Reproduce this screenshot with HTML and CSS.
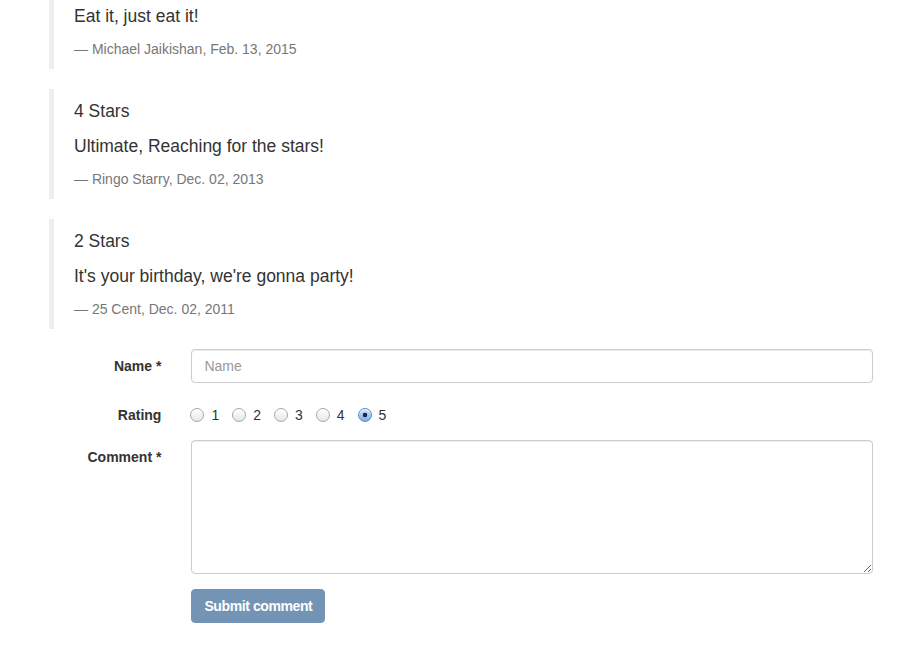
FILE: index.html
```html
<!DOCTYPE html>
<html lang="en">
<head>
<meta charset="utf-8">
<title>Comments</title>
<link rel="stylesheet" href="styles.css">
</head>
<body>
<div class="page">
  <div class="reviews">
    <blockquote class="review">
      <p>Eat it, just eat it!</p>
      <footer>Michael Jaikishan, Feb. 13, 2015</footer>
    </blockquote>
    <blockquote class="review">
      <p>4 Stars</p>
      <p>Ultimate, Reaching for the stars!</p>
      <footer>Ringo Starry, Dec. 02, 2013</footer>
    </blockquote>
    <blockquote class="review">
      <p>2 Stars</p>
      <p>It's your birthday, we're gonna party!</p>
      <footer>25 Cent, Dec. 02, 2011</footer>
    </blockquote>
  </div>
  <form class="comment-form">
    <div class="form-row">
      <label class="control-label" for="name">Name *</label>
      <div class="field">
        <input class="text-input" id="name" type="text" placeholder="Name">
      </div>
    </div>
    <div class="form-row">
      <span class="control-label">Rating</span>
      <div class="field radios">
        <label class="radio-inline"><input type="radio" name="rating" value="1"><span>1</span></label>
        <label class="radio-inline"><input type="radio" name="rating" value="2"><span>2</span></label>
        <label class="radio-inline"><input type="radio" name="rating" value="3"><span>3</span></label>
        <label class="radio-inline"><input type="radio" name="rating" value="4"><span>4</span></label>
        <label class="radio-inline"><input type="radio" name="rating" value="5" checked><span>5</span></label>
      </div>
    </div>
    <div class="form-row">
      <label class="control-label" for="comment">Comment *</label>
      <div class="field">
        <textarea class="text-area" id="comment" rows="6"></textarea>
      </div>
    </div>
    <div class="form-row">
      <span></span>
      <div class="field">
        <button class="btn-submit" type="submit" disabled>Submit comment</button>
      </div>
    </div>
  </form>
</div>
</body>
</html>
```

FILE: styles.css
```css
* { box-sizing: border-box; }

html, body {
  margin: 0;
  background: #fff;
}

body {
  font-family: "Liberation Sans", Arial, sans-serif;
  font-size: 14px;
  line-height: 1.42857;
  color: #333;
}

.page {
  margin-top: -6px;
  padding: 0 23px 0 34px;
}

.review {
  margin: 0 15px 20px;
  padding: 10px 20px;
  border-left: 5px solid #eee;
  font-size: 17.5px;
}

.review p {
  margin: 0 0 10px;
  line-height: 25px;
}

.review footer {
  font-size: 14px;
  line-height: 20px;
  color: #777;
}

.review footer::before {
  content: "\2014 \00A0";
}

.form-row {
  display: grid;
  grid-template-columns: 142.4px 1fr;
  margin-bottom: 15px;
}

.control-label {
  padding: 7px 15px 0;
  text-align: right;
  font-weight: bold;
  line-height: 20px;
}

.field {
  padding: 0 15px;
}

.text-input,
.text-area {
  display: block;
  width: 100%;
  padding: 6px 12px;
  font-family: inherit;
  font-size: 14px;
  line-height: 20px;
  color: #555;
  background: #fff;
  border: 1px solid #ccc;
  border-radius: 4px;
  box-shadow: inset 0 1px 1px rgba(0, 0, 0, .075);
}

.text-input {
  height: 34px;
}

.text-input::placeholder {
  color: #999;
}

.text-area {
  height: 134px;
  resize: vertical;
}

.radios {
  display: flex;
  align-items: center;
  padding-top: 7px;
  line-height: 20px;
  height: 27px;
}

.radio-inline {
  display: inline-flex;
  align-items: center;
  margin-right: 14px;
  color: #333;
}

.radio-inline input {
  -webkit-appearance: none;
  appearance: none;
  width: 14px;
  height: 14px;
  margin: 0 7px 0 -1px;
  border-radius: 50%;
  border: 1px solid #a6a6a6;
  background: linear-gradient(#ffffff, #e6e6e6);
  box-shadow: inset 0 1px 0 #fff;
}

.radio-inline input:checked {
  border-color: #5b86c2;
  background: radial-gradient(circle, #1d2a3c 0, #1d2a3c 2px, transparent 2.6px),
              linear-gradient(#cfe3fb, #7fb0ec);
}

.btn-submit {
  height: 34px;
  padding: 6px 12px;
  font-family: inherit;
  font-size: 14px;
  font-weight: bold;
  letter-spacing: -0.4px;
  line-height: 20px;
  color: #fff;
  background: #7394b4;
  border: 1px solid #7394b4;
  border-radius: 4px;
}
```
